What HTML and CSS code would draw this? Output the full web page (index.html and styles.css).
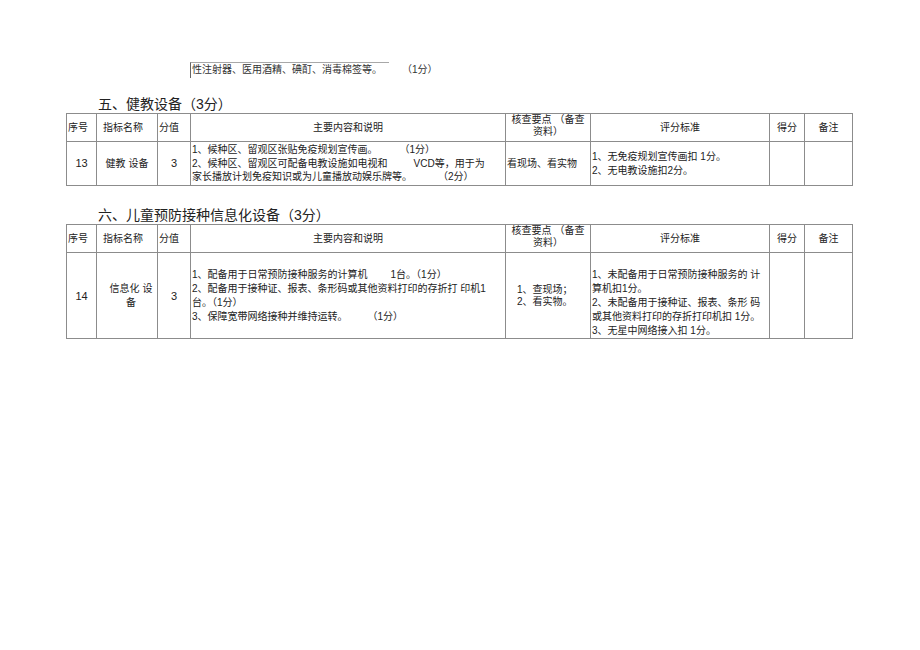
FILE: index.html
```html
<!DOCTYPE html>
<html lang="zh">
<head>
<meta charset="utf-8">
<link rel="stylesheet" href="styles.css">
</head>
<body>
<div class="page">
  <div class="remnant"><span>性注射器、医用酒精、碘酊、消毒棉签等。</span><span class="pts-r">（1分）</span></div>

  <h2 class="sec sec-5">五、健教设备（3分）</h2>
  <table class="grid">
    <colgroup>
      <col class="c1"><col class="c2"><col class="c3"><col class="c4"><col class="c5"><col class="c6"><col class="c7"><col class="c8">
    </colgroup>
    <tr class="head">
      <td>序号</td>
      <td class="pl">指标名称</td>
      <td>分值</td>
      <td class="ctr">主要内容和说明</td>
      <td class="ctr two">核查要点 （备查<br>资料）</td>
      <td class="ctr">评分标准</td>
      <td class="ctr">得分</td>
      <td class="ctr">备注</td>
    </tr>
    <tr class="r1">
      <td class="ctr num">13</td>
      <td class="ctr">健教 设备</td>
      <td class="ctr num">3</td>
      <td class="lines">
        <div>1、候种区、留观区张贴免疫规划宣传画。<span class="g1"></span>（1分）</div>
        <div>2、候种区、留观区可配备电教设施如电视和<span class="g2"></span>VCD等，用于为</div>
        <div>家长播放计划免疫知识或为儿童播放动娱乐牌等。<span class="g3"></span>（2分）</div>
      </td>
      <td>看现场、看实物</td>
      <td class="lines">
        <div>1、无免疫规划宣传画扣 1分。</div>
        <div>2、无电教设施扣2分。</div>
      </td>
      <td></td>
      <td></td>
    </tr>
  </table>

  <h2 class="sec sec-6">六、儿童预防接种信息化设备（3分）</h2>
  <table class="grid">
    <colgroup>
      <col class="c1"><col class="c2"><col class="c3"><col class="c4"><col class="c5"><col class="c6"><col class="c7"><col class="c8">
    </colgroup>
    <tr class="head">
      <td>序号</td>
      <td class="pl">指标名称</td>
      <td>分值</td>
      <td class="ctr">主要内容和说明</td>
      <td class="ctr two">核查要点 （备查<br>资料）</td>
      <td class="ctr">评分标准</td>
      <td class="ctr">得分</td>
      <td class="ctr">备注</td>
    </tr>
    <tr class="r2">
      <td class="ctr num">14</td>
      <td class="ctr shift">信息化 设<br>备</td>
      <td class="ctr num">3</td>
      <td class="lines">
        <div>1、配备用于日常预防接种服务的计算机<span class="g4"></span>1台。（1分）</div>
        <div>2、配备用于接种证、报表、条形码或其他资料打印的存折打 印机1</div>
        <div>台。（1分）</div>
        <div>3、保障宽带网络接种并维持运转。<span class="g5"></span>（1分）</div>
      </td>
      <td class="check">
        <div>1、查现场；</div>
        <div>2、看实物。</div>
      </td>
      <td class="lines bottom">
        <div>1、未配备用于日常预防接种服务的 计</div>
        <div>算机扣1分。</div>
        <div>2、未配备用于接种证、报表、条形 码</div>
        <div>或其他资料打印的存折打印机扣 1分。</div>
        <div>3、无星中网络接入扣 1分。</div>
      </td>
      <td></td>
      <td></td>
    </tr>
  </table>
</div>
</body>
</html>
```
FILE: styles.css
```css
html, body {
  margin: 0;
  padding: 0;
  background: #ffffff;
}

body {
  font-family: "Liberation Sans", "Noto Sans CJK SC", sans-serif;
  color: #222222;
}

.page {
  padding: 62px 0 0 66px;
}

.remnant {
  margin-left: 124px;
  width: 197px;
  height: 15px;
  border-top: 1px solid #a8a8a8;
  border-left: 1px solid #666666;
  font-size: 10px;
  line-height: 14px;
  padding-left: 1px;
  white-space: nowrap;
  color: #333333;
}

.pts-r {
  margin-left: 25px;
}

.sec {
  margin: 0;
  padding-left: 32px;
  font-size: 14px;
  font-weight: normal;
  line-height: 18px;
  height: 18px;
  color: #222222;
}

.sec-5 {
  margin-top: 17px;
}

.sec-6 {
  margin-top: 20px;
}

.grid {
  border-collapse: collapse;
  table-layout: fixed;
  width: 787px;
  font-size: 10px;
  line-height: 13.5px;
}

.grid td {
  border: 1px solid #8c8c8c;
  padding: 0 1px;
  vertical-align: middle;
  white-space: nowrap;
  overflow: visible;
}

.c1 { width: 30px; }
.c2 { width: 61px; }
.c3 { width: 33px; }
.c4 { width: 315px; }
.c5 { width: 85px; }
.c6 { width: 179px; }
.c7 { width: 35px; }
.c8 { width: 48px; }

.head td {
  height: 27px;
}

.head .two {
  vertical-align: top;
  line-height: 12px;
  padding-top: 0;
}

.r1 td {
  height: 43px;
}

.r2 td {
  height: 85px;
  line-height: 14px;
}

.ctr {
  text-align: center;
}

.pl {
  padding-left: 6px !important;
}

.num {
  font-size: 11px;
}

.shift {
  padding-left: 9px !important;
}

.check {
  padding-left: 11px !important;
  line-height: 12px !important;
}

.bottom {
  vertical-align: bottom !important;
}

.g1, .g2, .g3, .g4, .g5 {
  display: inline-block;
}

.g1 { width: 22px; }
.g2 { width: 26px; }
.g3 { width: 26px; }
.g4 { width: 23px; }
.g5 { width: 20px; }
```
